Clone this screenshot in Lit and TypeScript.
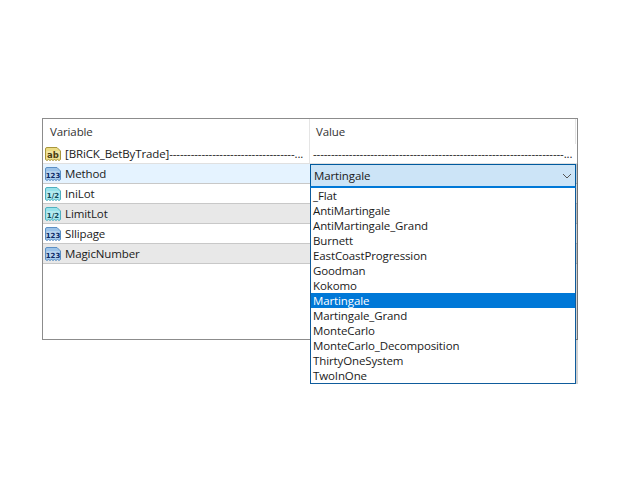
import { LitElement, css, html, svg } from 'lit';
import { customElement } from 'lit/decorators.js';

type IconKind = 'ab' | 'int' | 'dbl';

const ICONS: Record<IconKind, { fill: string; stroke: string; label: string; ink: string; size: number }> = {
  ab: { fill: '#ecdc84', stroke: '#a8963c', label: 'ab', ink: '#4a3d10', size: 8.5 },
  int: { fill: '#9cc3e8', stroke: '#5b8fc4', label: '123', ink: '#0e2a66', size: 7 },
  dbl: { fill: '#98e2ea', stroke: '#4fb0c0', label: '1/2', ink: '#124a5c', size: 7 },
};

const ROWS: { name: string; icon: IconKind; tone: string; value: string }[] = [
  { name: '[BRiCK_BetByTrade]' + '-'.repeat(35) + '...', icon: 'ab', tone: 'plain', value: '-'.repeat(70) + '...' },
  { name: 'Method', icon: 'int', tone: 'active', value: '' },
  { name: 'IniLot', icon: 'dbl', tone: 'plain', value: '' },
  { name: 'LimitLot', icon: 'dbl', tone: 'alt', value: '' },
  { name: 'Sllipage', icon: 'int', tone: 'plain', value: '' },
  { name: 'MagicNumber', icon: 'int', tone: 'alt', value: '' },
];

const OPTIONS = [
  '_Flat',
  'AntiMartingale',
  'AntiMartingale_Grand',
  'Burnett',
  'EastCoastProgression',
  'Goodman',
  'Kokomo',
  'Martingale',
  'Martingale_Grand',
  'MonteCarlo',
  'MonteCarlo_Decomposition',
  'ThirtyOneSystem',
  'TwoInOne',
];

@customElement('app-root')
export class AppRoot extends LitElement {
  static styles = css`
    :host {
      display: block;
      width: 640px;
      height: 480px;
      background: #fff;
      font-family: 'Open Sans', 'Noto Sans', sans-serif;
      font-size: 11.5px;
      letter-spacing: -0.12px;
      color: #1a1a1a;
      overflow: hidden;
    }

    .page {
      padding: 118px 0 0 42px;
    }

    .panel {
      position: relative;
      box-sizing: border-box;
      width: 536px;
      height: 222px;
      border: 1px solid #8c8c8c;
      background: #fff;
    }

    .head,
    .row {
      display: grid;
      grid-template-columns: 267px 1fr;
      box-sizing: border-box;
    }

    .head {
      height: 25px;
      color: #333;
    }

    .head > div {
      padding: 5px 0 0 7px;
      border-right: 1px solid #e5e5e5;
    }

    .head > div + div {
      padding-left: 6px;
      margin-right: 1px;
    }

    .row {
      height: 20px;
      border-bottom: 1px solid #c8c8c8;
    }

    .row.first {
      border-bottom: 1px solid #e0e0e0;
    }

    .row.active {
      background: #e5f3ff;
    }

    .row.alt {
      background: #e8e8e8;
    }

    .cell {
      display: flex;
      align-items: center;
      gap: 4px;
      padding-left: 2px;
      white-space: nowrap;
      overflow: hidden;
    }

    .row.first .cell:first-child {
      border-right: 1px solid #e5e5e5;
    }

    .cell svg {
      flex: none;
    }

    .cell.value {
      padding-left: 3px;
    }

    .combo {
      position: absolute;
      left: 267px;
      top: 45px;
      width: 266px;
      box-sizing: border-box;
      box-shadow: 2px 0 0 rgba(0, 0, 0, 0.18);
    }

    .field {
      display: flex;
      align-items: center;
      justify-content: space-between;
      box-sizing: border-box;
      height: 24px;
      padding: 0 3px;
      background: #cce4f7;
      border: 1px solid #005a9e;
      border-bottom: 2px solid #0078d7;
    }

    .list {
      box-sizing: border-box;
      height: 196px;
      background: #fff;
      border: 1px solid #0f5c9c;
      border-top: 0;
    }

    .option {
      height: 15px;
      line-height: 15px;
      padding-left: 2px;
      white-space: nowrap;
    }

    .option.selected {
      background: #0078d7;
      color: #fff;
    }
  `;

  private icon(kind: IconKind) {
    const i = ICONS[kind];
    return html`<svg width="16" height="16" viewBox="0 0 16 16">
      ${svg`<path d="M0.5 3 Q0.5 1.5 2 1.5 H12 L15.5 5 V13.5 L14 14.5 L12.5 13.5 L11 14.5 L9.5 13.5 L8 14.5 L6.5 13.5 L5 14.5 L3.5 13.5 L2 14.5 L0.5 13.5 Z"
        fill=${i.fill} stroke=${i.stroke} />
      <rect x="1.5" y="5" width="13" height="7.5" fill="#fff" fill-opacity="0.25" />
      <text x="8" y="11.5" text-anchor="middle" letter-spacing="0" font-family="'DejaVu Sans', sans-serif" font-weight="700"
        font-size=${i.size} fill=${i.ink}>${i.label}</text>`}
    </svg>`;
  }

  render() {
    return html`
      <div class="page">
        <div class="panel">
          <div class="head">
            <div>Variable</div>
            <div>Value</div>
          </div>
          ${ROWS.map((r, idx) => html`
            <div class="row ${r.tone} ${idx === 0 ? 'first' : ''}">
              <div class="cell">${this.icon(r.icon)}<span>${r.name}</span></div>
              <div class="cell value">${r.value}</div>
            </div>
          `)}
          <div class="combo">
            <div class="field">
              <span>Martingale</span>
              <svg width="10" height="6" viewBox="0 0 10 6">
                <path d="M1 1 L5 5 L9 1" fill="none" stroke="#555" stroke-width="1" />
              </svg>
            </div>
            <div class="list">
              ${OPTIONS.map((o) => html`
                <div class="option ${o === 'Martingale' ? 'selected' : ''}">${o}</div>
              `)}
            </div>
          </div>
        </div>
      </div>
    `;
  }
}

declare global {
  interface HTMLElementTagNameMap {
    'app-root': AppRoot;
  }
}
